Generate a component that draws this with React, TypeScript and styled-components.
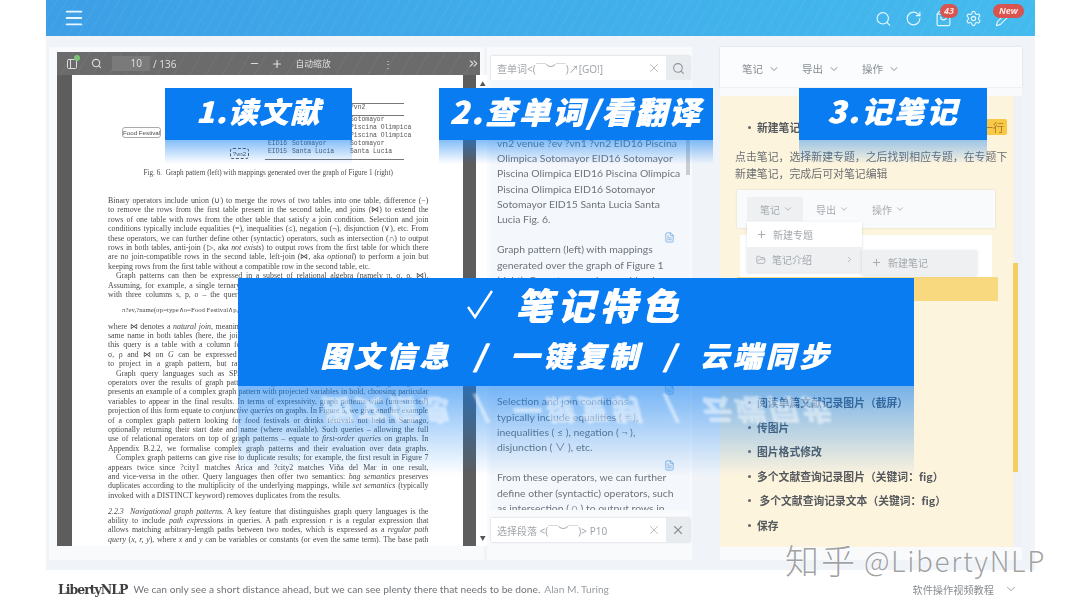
import React from "react";
import styled, { createGlobalStyle } from "styled-components";
import { ChevronDown, ChevronRight, ChevronsRight, FileText, FolderOpen, Menu, Minus, PanelLeft, Pencil, Plus, RotateCw, Search, Settings, ShoppingBag, X } from "lucide-react";

const UI_FONT = `Lato, "Noto Sans CJK SC", sans-serif`;
const CJK_FONT = `"Noto Sans CJK SC", "Noto Sans", sans-serif`;
const BLUE = "#0a7cf2";

const GlobalStyle = createGlobalStyle`
  html, body { margin: 0; padding: 0; background: #fff; }
  * { box-sizing: border-box; }
`;

/* ── Page frame ── */
const Page = styled.div`
  position: relative;
  width: 1080px;
  height: 608px;
  overflow: hidden;
  background: #fff;
  font-family: ${UI_FONT};
`;

const Frame = styled.div`
  width: 989px;
  height: 608px;
  margin-left: 46px;
  display: flex;
  flex-direction: column;
  background: #fff;
  filter: blur(0.35px);
`;

const Header = styled.header`
  height: 36px;
  flex: none;
  display: flex;
  align-items: center;
  padding: 0 23px 0 17px;
  color: #e8f6ff;
  background:
    repeating-linear-gradient(120deg, rgba(255, 255, 255, 0.05) 0 1px, transparent 1px 9px),
    linear-gradient(90deg, #3d9fe6, #44bbee);
`;

const HeaderTools = styled.div`
  margin-left: auto;
  display: flex;
  align-items: center;
  gap: 13px;
`;

const ToolIcon = styled.span`
  position: relative;
  display: flex;
  width: 17px;
  height: 17px;
`;

const Badge = styled.span<{ $wide?: boolean }>`
  position: absolute;
  top: -6px;
  left: ${(p) => (p.$wide ? "-2px" : "5px")};
  height: 14px;
  padding: 0 ${(p) => (p.$wide ? "6px" : "4px")};
  border-radius: 7px;
  background: #d9534f;
  color: #fbe3e0;
  font-family: "Noto Sans", sans-serif;
  font-size: 9px;
  font-weight: 700;
  font-style: italic;
  line-height: 14px;
`;

const Main = styled.main`
  height: 534px;
  flex: none;
  display: flex;
  padding: 11px 13px 10px 3px;
  background: #f0f4f9;
`;

/* ── PDF viewer ── */
const ReaderCard = styled.section`
  width: 435px;
  flex: none;
  padding: 5px 4px 14px 8px;
  background: #f9fafc;
`;

const Viewer = styled.div`
  height: 494px;
  display: flex;
  flex-direction: column;
`;

const PdfBar = styled.div`
  height: 23px;
  flex: none;
  display: flex;
  align-items: center;
  padding-left: 9px;
  color: #ddd;
  font-family: "Noto Sans", "Noto Sans CJK SC", sans-serif;
  font-size: 10px;
  white-space: nowrap;
  background:
    repeating-linear-gradient(120deg, rgba(255, 255, 255, 0.05) 0 1px, transparent 1px 14px),
    #6b6b6b;
`;

const PdfIcon = styled.span<{ $left: number }>`
  position: relative;
  display: flex;
  flex: none;
  margin-left: ${(p) => p.$left}px;
`;

const ZoomLabel = styled(PdfIcon)`
  font-size: 8.8px;
`;

const GreenDot = styled.i`
  position: absolute;
  top: -3px;
  right: -2px;
  width: 6px;
  height: 6px;
  border-radius: 50%;
  background: #7cc576;
`;

const PageInput = styled.span`
  width: 38px;
  height: 15px;
  flex: none;
  margin-left: 10px;
  padding-right: 8px;
  text-align: right;
  line-height: 15px;
  background: #7a7a7a;
`;

const PdfBody = styled.div`
  flex: 1;
  min-height: 0;
  display: flex;
`;

const PdfStage = styled.div`
  flex: 1;
  display: flex;
  padding: 0 13px 0 15px;
  background: #5d5d5d;
`;

const PaperSheet = styled.div`
  flex: 1;
  padding: 0 35px 0 36px;
  overflow: hidden;
  background: #fff;
  font-family: "Liberation Serif", serif;
  color: #4a4a4a;
`;

const PdfScroll = styled.div`
  width: 13px;
  flex: none;
  display: flex;
  flex-direction: column;
  justify-content: space-between;
  align-items: center;
  padding: 4px 0;
  background: #fff;
  color: #555;
  font-size: 6px;
`;

const Figure = styled.div`
  position: relative;
  height: 90px;
`;

const Node = styled.span<{ $x: number; $y: number; $w: number; $dashed?: boolean }>`
  position: absolute;
  left: ${(p) => p.$x}px;
  top: ${(p) => p.$y}px;
  width: ${(p) => p.$w}px;
  height: 11px;
  border: 1px ${(p) => (p.$dashed ? "dashed #555" : "solid #aaa")};
  border-radius: 3px;
  font-family: "Liberation Sans", sans-serif;
  font-size: 6.2px;
  line-height: 9px;
  text-align: center;
  white-space: nowrap;
`;

const MappingTable = styled.div`
  position: absolute;
  left: 157px;
  top: 28px;
  width: 139px;
  height: 57px;
  padding: 0 0 0 3px;
  border-top: 1px solid #777;
  border-bottom: 1px solid #777;
  display: grid;
  grid-template-columns: 24px 58px 1fr;
  grid-template-rows: 12px repeat(5, 8px);
  row-gap: 0;
  font-family: "Liberation Mono", monospace;
  font-size: 6.4px;
  line-height: 8px;
  color: #555;
  white-space: nowrap;
  background: linear-gradient(#777, #777) 0 11px / 100% 1px no-repeat;
`;

const Caption = styled.div`
  margin-top: 3px;
  height: 28px;
  text-align: center;
  font-size: 7.2px;
  line-height: 10px;
`;

const PaperLine = styled.div<{ $indent?: boolean; $last?: boolean }>`
  height: 9.4px;
  font-size: 7.9px;
  line-height: 9.4px;
  white-space: nowrap;
  text-align: justify;
  text-align-last: ${(p) => (p.$last ? "left" : "justify")};
  padding-left: ${(p) => (p.$indent ? "8px" : "0")};
`;

const Formula = styled.div`
  height: 22.4px;
  padding-left: 14px;
  font-size: 6.8px;
  line-height: 22.4px;
  white-space: nowrap;
`;

const SectionGap = styled.div`
  height: 6.6px;
`;

/* ── Translation column ── */
const LookupColumn = styled.section`
  width: 205px;
  flex: none;
  margin-left: 3px;
  padding: 9px 2px 18px 4px;
  display: flex;
  flex-direction: column;
  background: #f9fafc;
`;

const SearchRow = styled.div`
  height: 24px;
  flex: none;
  display: flex;
  box-shadow: 0 0 2px rgba(120, 130, 150, 0.4);
`;

const SearchInput = styled.div`
  flex: 1;
  display: flex;
  align-items: center;
  justify-content: space-between;
  padding: 0 5px 0 6px;
  background: #fff;
  color: #a2a6ab;
  font-family: "Noto Sans", "Noto Sans CJK SC", sans-serif;
  font-size: 10px;
  white-space: nowrap;
`;

const SearchButton = styled.div`
  width: 24px;
  flex: none;
  display: flex;
  align-items: center;
  justify-content: center;
  background: #e9ecef;
  color: #8b939b;
`;

const TextPane = styled.div`
  position: relative;
  height: 430px;
  flex: none;
  overflow: hidden;
  padding: 56px 16px 0 6px;
  background: #f4f7fb;
  color: #6d747c;
  font-size: 10.4px;
  line-height: 15.2px;
  white-space: nowrap;
`;

const ScrollThumb = styled.i`
  position: absolute;
  right: 0;
  top: 60px;
  width: 4px;
  height: 35px;
  background: #c9ced4;
`;

const Para = styled.p`
  position: relative;
  margin: 0 0 15.2px;
`;

const NoteMark = styled.span`
  position: absolute;
  right: -1px;
  top: -10px;
  display: flex;
  color: #7fb2e0;
`;

const BottomRow = styled(SearchRow)`
  margin-top: 8px;
`;

/* ── Notes column ── */
const NotesColumn = styled.section`
  flex: 1;
  margin-left: 28px;
  display: flex;
  flex-direction: column;
  gap: 9px;
  background: #f9fafc;
`;

const NotesBar = styled.div`
  height: 40px;
  flex: none;
  display: flex;
  align-items: center;
  padding: 3px 0 0 22px;
  gap: 22px;
  background: #fbfcfd;
  box-shadow: 0 0 2px rgba(120, 130, 150, 0.25);
`;

const BarMenu = styled.span<{ $small?: boolean; $active?: boolean }>`
  display: flex;
  align-items: center;
  gap: ${(p) => (p.$small ? "3px" : "5px")};
  height: 24px;
  color: ${(p) => (p.$small ? "#a5abb0" : "#878d93")};
  font-family: ${CJK_FONT};
  font-size: ${(p) => (p.$small ? "10px" : "10.5px")};
  padding: ${(p) => (p.$small ? "0 10px 0 13px" : "0")};
  background: ${(p) => (p.$active ? "#eef0f2" : "transparent")};
`;

const NotesTrack = styled.div`
  position: relative;
  height: 451px;
  flex: none;
  background: #eef2f8;
  padding-right: 8px;
`;

const NotesScrollThumb = styled.i`
  position: absolute;
  right: 4px;
  top: 167px;
  width: 5px;
  height: 209px;
  background: #f3cf62;
`;

const NotesBody = styled.div`
  height: 451px;
  overflow: hidden;
  padding: 22px 7px 0 15px;
  background: #fdf4de;
  color: #55585c;
  font-family: ${CJK_FONT};
`;

const Heading = styled.div`
  position: relative;
  display: flex;
  align-items: center;
  justify-content: space-between;
  height: 18px;
  padding-left: 22px;
  font-size: 10.8px;
  font-weight: 700;
  &::before {
    content: "";
    position: absolute;
    left: 13px;
    top: 8px;
    width: 3px;
    height: 3px;
    border-radius: 50%;
    background: #666;
  }
`;

const Tag = styled.span`
  padding: 0 3px;
  height: 16px;
  line-height: 16px;
  background: #f9c846;
  color: #a5792a;
  font-weight: 400;
  font-size: 11px;
  border-radius: 2px;
`;

const NoteText = styled.p`
  margin: 11.5px -4px 0 0;
  height: 42.5px;
  font-size: 10.9px;
  line-height: 17px;
  color: #6b6e72;
`;

const Mock = styled.div`
  position: relative;
  height: 200px;
  margin: 0 12px 0 2px;
`;

const MockBar = styled.div`
  height: 38px;
  display: flex;
  align-items: center;
  padding-left: 10px;
  background: #f9fafb;
  box-shadow: 0 0 2px rgba(120, 130, 150, 0.25);
`;

const MockPane = styled.div`
  height: 42px;
  margin: 7px 3px 0;
  background: #fff;
`;

const MockStrip = styled.div`
  height: 24px;
  margin-right: -3px;
  background: #f9d97f;
`;

const Dropdown = styled.div<{ $x: number; $y: number; $gray?: boolean }>`
  position: absolute;
  left: ${(p) => p.$x}px;
  top: ${(p) => p.$y}px;
  width: 115px;
  background: ${(p) => (p.$gray ? "#eef0f2" : "#fff")};
  box-shadow: 0 1px 3px rgba(90, 100, 110, 0.2);
`;

const DropItem = styled.div<{ $gray?: boolean }>`
  height: 25px;
  display: flex;
  align-items: center;
  gap: 6px;
  padding: 0 8px 0 9px;
  color: #a3a8ad;
  font-size: 10px;
  background: ${(p) => (p.$gray ? "#eef0f2" : "transparent")};
`;

const DropArrow = styled.span`
  margin-left: auto;
  display: flex;
`;

const BulletList = styled.ul`
  margin: 0;
  padding: 0 0 0 22px;
  list-style: none;
`;

const Bullet = styled.li`
  position: relative;
  height: 24.6px;
  font-size: 10.8px;
  font-weight: 700;
  line-height: 24.6px;
  white-space: pre;
  &::before {
    content: "";
    position: absolute;
    left: -9px;
    top: 11px;
    width: 3px;
    height: 3px;
    border-radius: 50%;
    background: #666;
  }
`;

/* ── Footer ── */
const Footer = styled.footer`
  flex: 1;
  display: flex;
  align-items: center;
  padding: 0 17px 0 12px;
  font-size: 10.2px;
  color: #6f7377;
  white-space: nowrap;
`;

const Brand = styled.b`
  font-family: "DejaVu Serif", serif;
  font-size: 12.5px;
  letter-spacing: -1px;
  color: #3e3e3e;
  margin-right: 6px;
`;

const Quote = styled.span`
  color: #999da1;
  margin-left: 4px;
`;

const Tutorial = styled.span`
  margin-left: auto;
  display: flex;
  align-items: center;
  gap: 10px;
  color: #8a8e92;
  font-family: ${CJK_FONT};
  font-size: 10.2px;
`;

/* ── Promo overlays ── */
const Callout = styled.div<{ $x: number; $w: number; $y: number; $h: number; $drop: number }>`
  position: absolute;
  left: ${(p) => p.$x}px;
  top: ${(p) => p.$y}px;
  width: ${(p) => p.$w}px;
  height: ${(p) => p.$h}px;
  padding-bottom: ${(p) => p.$drop}px;
  display: flex;
  flex-direction: column;
  align-items: center;
  justify-content: center;
  background: ${BLUE};
  filter: blur(0.3px);
`;

const Glow = styled.div<{ $h: number; $strength: number }>`
  position: absolute;
  left: 0;
  right: 0;
  top: 100%;
  height: ${(p) => p.$h}px;
  overflow: hidden;
  background: linear-gradient(180deg, rgba(10, 124, 242, ${(p) => p.$strength}), rgba(10, 124, 242, 0));
`;

const PromoText = styled.span<{ $size: number; $space: number }>`
  font-family: ${CJK_FONT};
  font-size: ${(p) => p.$size}px;
  letter-spacing: ${(p) => p.$space}px;
  font-weight: 900;
  font-style: italic;
  line-height: 1;
  color: #fff;
  white-space: pre;
  text-shadow: 0.8px 0 0 #fff;
`;

const CheckRow = styled.div`
  display: flex;
  align-items: center;
  gap: 22px;
  margin-bottom: 17px;
  margin-left: -2px;
`;

const Mirror = styled.div`
  text-align: center;
  margin-top: 10px;
  transform: scaleY(-1);
  opacity: 0.5;
  filter: blur(0.8px);
`;

const Watermark = styled.div`
  position: absolute;
  left: 785px;
  top: 540px;
  display: flex;
  align-items: center;
  gap: 7px;
  font-family: ${CJK_FONT};
  font-size: 28px;
  font-weight: 300;
  letter-spacing: 1.6px;
  line-height: 40px;
  color: rgba(125, 125, 125, 0.72);
  white-space: nowrap;
  text-shadow: 0 0 2px rgba(255, 255, 255, 0.9);
`;

const WatermarkCjk = styled.span`
  font-size: 34px;
  letter-spacing: 2px;
`;

const BODY_A: React.ReactNode[] = [
  "Binary operators include union (∪) to merge the rows of two tables into one table, difference (−)",
  "to remove the rows from the first table present in the second table, and joins (⋈) to extend the",
  "rows of one table with rows from the other table that satisfy a join condition. Selection and join",
  "conditions typically include equalities (=), inequalities (≤), negation (¬), disjunction (∨), etc. From",
  "these operators, we can further define other (syntactic) operators, such as intersection (∩) to output",
  <>rows in both tables, anti-join (▷, aka <i>not exists</i>) to output rows from the first table for which there</>,
  <>are no join-compatible rows in the second table, left-join (⋈, aka <i>optional</i>) to perform a join but</>,
  "keeping rows from the first table without a compatible row in the second table, etc.",
  "  Graph patterns can then be expressed in a subset of relational algebra (namely π, σ, ρ, ⋈).",
  "Assuming, for example, a single ternary relation G(s, p, o) representing a graph – i.e., a table G",
  "with three columns s, p, o – the query of Figure 5 can be expressed in relational algebra as:",
];

const BODY_B: React.ReactNode[] = [
  <>where ⋈ denotes a <i>natural join</i>, meaning that equality is checked across pairs of columns with the</>,
  "same name in both tables (here, the join is thus performed on the subject column). The result of",
  "this query is a table with a column for each variable: ev and name. All operators such as π,",
  <>σ, ρ and ⋈ on <i>G</i> can be expressed as graph patterns, though ∪ and − need not be used</>,
  "to project in a graph pattern, but rather are applied to the results of such graph patterns.",
  "  Graph query languages such as SPARQL also support the use of set and other relational",
  "operators over the results of graph patterns, though not all of them in every language. Figure 7",
  "presents an example of a complex graph pattern with projected variables in bold, choosing particular",
  "variables to appear in the final results. In terms of expressivity, graph patterns with (unrestricted)",
  <>projection of this form equate to <i>conjunctive queries</i> on graphs. In Figure 5, we give another example</>,
  "of a complex graph pattern looking for food festivals or drinks festivals not held in Santiago,",
  "optionally returning their start date and name (where available). Such queries – allowing the full",
  <>use of relational operators on top of graph patterns – equate to <i>first-order queries</i> on graphs. In</>,
  "Appendix B.2.2, we formalise complex graph patterns and their evaluation over data graphs.",
  "  Complex graph patterns can give rise to duplicate results; for example, the first result in Figure 7",
  "appears twice since ?city1 matches Arica and ?city2 matches Viña del Mar in one result,",
  <>and vice-versa in the other. Query languages then offer two semantics: <i>bag semantics</i> preserves</>,
  <>duplicates according to the multiplicity of the underlying mappings, while <i>set semantics</i> (typically</>,
  "invoked with a DISTINCT keyword) removes duplicates from the results.",
];

const BODY_C: React.ReactNode[] = [
  <><i>2.2.3 &nbsp;Navigational graph patterns.</i> A key feature that distinguishes graph query languages is the</>,
  <>ability to include <i>path expressions</i> in queries. A path expression <i>r</i> is a regular expression that</>,
  <>allows matching arbitrary-length paths between two nodes, which is expressed as a <i>regular path</i></>,
  <><i>query</i> (<i>x, r, y</i>), where <i>x</i> and <i>y</i> can be variables or constants (or even the same term). The base path</>,
];

const MAPPINGS = [
  ["", "", "?vn2"],
  ["", "", "Sotomayor"],
  ["", "", "Piscina Olimpica"],
  ["", "", "Piscina Olimpica"],
  ["EID16", "Sotomayor", "Sotomayor"],
  ["EID15", "Santa Lucia", "Santa Lucia"],
];

const LIST = ["阅读单篇文献记录图片（截屏）", "传图片", "图片格式修改", "多个文献查询记录图片（关键词：fig）", " 多个文献查询记录文本（关键词：fig）", "保存"];

function renderLines(list: React.ReactNode[], lastIdx: number[] = []) {
  return list.map((line, i) => {
    const text = typeof line === "string" ? line : null;
    const indent = !!text && text.startsWith("  ");
    return (
      <PaperLine key={i} $indent={indent} $last={lastIdx.includes(i)}>
        {indent ? text!.trim() : line}
      </PaperLine>
    );
  });
}

export default function App() {
  return (
    <Page>
      <GlobalStyle />
      <Frame>
        <Header>
          <Menu size={22} strokeWidth={2} />
          <HeaderTools>
            <ToolIcon><Search size={18} strokeWidth={1.6} /></ToolIcon>
            <ToolIcon><RotateCw size={17} strokeWidth={1.6} /></ToolIcon>
            <ToolIcon><ShoppingBag size={17} strokeWidth={1.6} /><Badge>43</Badge></ToolIcon>
            <ToolIcon><Settings size={17} strokeWidth={1.6} /></ToolIcon>
            <ToolIcon><Pencil size={17} strokeWidth={1.6} /><Badge $wide>New</Badge></ToolIcon>
          </HeaderTools>
        </Header>

        <Main>
          <ReaderCard>
            <Viewer>
              <PdfBar>
                <PdfIcon $left={0}><PanelLeft size={12} /><GreenDot /></PdfIcon>
                <PdfIcon $left={13}><Search size={11} strokeWidth={2.4} /></PdfIcon>
                <PageInput>10</PageInput>
                <PdfIcon $left={3}>/ 136</PdfIcon>
                <PdfIcon $left={73}><Minus size={11} strokeWidth={2.4} /></PdfIcon>
                <PdfIcon $left={11}><Plus size={12} strokeWidth={2.4} /></PdfIcon>
                <ZoomLabel $left={12}>自动缩放</ZoomLabel>
                <PdfIcon $left={52}>⋮</PdfIcon>
                <PdfIcon $left={74}><ChevronsRight size={13} /></PdfIcon>
              </PdfBar>
              <PdfBody>
                <PdfStage>
                  <PaperSheet>
                    <Figure>
                      <Node $x={14} $y={52} $w={39}>Food Festival</Node>
                      <Node $x={122} $y={73} $w={19} $dashed>?vn2</Node>
                      <MappingTable>
                        {MAPPINGS.flat().map((cell, i) => <span key={i}>{cell}</span>)}
                      </MappingTable>
                    </Figure>
                    <Caption>Fig. 6. &nbsp;Graph pattern (left) with mappings generated over the graph of Figure 1 (right)</Caption>
                    {renderLines(BODY_A, [7])}
                    <Formula>π?ev,?name(σp=type∧o=Food Festival∧p₁=name(ρs/ev(G) ⋈ ρs/ev,p/p₁,o/name(G)))</Formula>
                    {renderLines(BODY_B, [18])}
                    <SectionGap />
                    {renderLines(BODY_C)}
                  </PaperSheet>
                </PdfStage>
                <PdfScroll><span>▲</span><span>▼</span></PdfScroll>
              </PdfBody>
            </Viewer>
          </ReaderCard>

          <LookupColumn>
            <SearchRow>
              <SearchInput>查单词&lt;(￣︶￣)↗[GO!]<X size={14} strokeWidth={1.3} /></SearchInput>
              <SearchButton><Search size={13} /></SearchButton>
            </SearchRow>
            <TextPane>
              <ScrollThumb />
              <Para>vn2 venue ?ev ?vn1 ?vn2 EID16 Piscina<br />Olimpica Sotomayor EID16 Sotomayor<br />Piscina Olimpica EID16 Piscina Olimpica<br />Piscina Olimpica EID16 Sotomayor<br />Sotomayor EID15 Santa Lucia Santa<br />Lucia Fig. 6.</Para>
              <Para><NoteMark><FileText size={11} /></NoteMark>Graph pattern (left) with mappings<br />generated over the graph of Figure 1<br />(right). Operators can be combined.</Para>
              <Para><NoteMark><FileText size={11} /></NoteMark>Binary operators include union ( ∪ ) to<br />merge the rows of two tables into one<br />table, difference ( − ) to remove the rows<br />from the first table, and joins ( ⋈ ) to<br />extend the rows of one table.</Para>
              <Para><NoteMark><FileText size={11} /></NoteMark>Selection and join conditions<br />typically include equalities ( = ),<br />inequalities ( ≤ ), negation ( ¬ ),<br />disjunction ( ∨ ), etc.</Para>
              <Para><NoteMark><FileText size={11} /></NoteMark>From these operators, we can further<br />define other (syntactic) operators, such<br />as intersection ( ∩ ) to output rows in<br />both tables.</Para>
            </TextPane>
            <BottomRow>
              <SearchInput>选择段落 &lt;(￣︶￣)&gt; P10<X size={14} strokeWidth={1.3} /></SearchInput>
              <SearchButton><X size={14} /></SearchButton>
            </BottomRow>
          </LookupColumn>

          <NotesColumn>
            <NotesBar>
              <BarMenu>笔记<ChevronDown size={12} /></BarMenu>
              <BarMenu>导出<ChevronDown size={12} /></BarMenu>
              <BarMenu>操作<ChevronDown size={12} /></BarMenu>
            </NotesBar>
            <NotesTrack>
              <NotesBody>
                <Heading>新建笔记<Tag>一行</Tag></Heading>
                <NoteText>点击笔记，选择新建专题，之后找到相应专题，在专题下新建笔记，完成后可对笔记编辑</NoteText>
                <Mock>
                  <MockBar>
                    <BarMenu $small $active>笔记<ChevronDown size={10} /></BarMenu>
                    <BarMenu $small>导出<ChevronDown size={10} /></BarMenu>
                    <BarMenu $small>操作<ChevronDown size={10} /></BarMenu>
                  </MockBar>
                  <MockPane />
                  <MockStrip />
                  <Dropdown $x={10} $y={32}>
                    <DropItem><Plus size={11} />新建专题</DropItem>
                    <DropItem $gray><FolderOpen size={10} />笔记介绍<DropArrow><ChevronRight size={9} /></DropArrow></DropItem>
                  </Dropdown>
                  <Dropdown $x={125} $y={60} $gray>
                    <DropItem $gray><Plus size={11} />新建笔记</DropItem>
                  </Dropdown>
                </Mock>
                <BulletList>
                  {LIST.map((item) => <Bullet key={item}>{item}</Bullet>)}
                </BulletList>
              </NotesBody>
              <NotesScrollThumb />
            </NotesTrack>
          </NotesColumn>
        </Main>

        <Footer>
          <Brand>LibertyNLP</Brand>
          We can only see a short distance ahead, but we can see plenty there that needs to be done.
          <Quote>Alan M. Turing</Quote>
          <Tutorial>软件操作视频教程<ChevronDown size={14} strokeWidth={1.4} /></Tutorial>
        </Footer>
      </Frame>

      <Callout $x={165} $w={187} $y={88} $h={52} $drop={8}>
        <PromoText $size={29} $space={2}>1.读文献</PromoText>
        <Glow $h={24} $strength={0.5} />
      </Callout>
      <Callout $x={439} $w={274} $y={88} $h={52} $drop={8}>
        <PromoText $size={31} $space={2.8}>2.查单词/看翻译</PromoText>
        <Glow $h={24} $strength={0.5} />
      </Callout>
      <Callout $x={799} $w={188} $y={88} $h={52} $drop={8}>
        <PromoText $size={30} $space={2.6}>3.记笔记</PromoText>
        <Glow $h={24} $strength={0.4} />
      </Callout>
      <Callout $x={238} $w={676} $y={278} $h={108} $drop={9}>
        <CheckRow>
          <svg width="26" height="30" viewBox="0 0 26 30" fill="none" stroke="#fff" strokeWidth="2.4">
            <path d="M1 17 L8 27 L25 1" />
          </svg>
          <PromoText $size={37} $space={5}>笔记特色</PromoText>
        </CheckRow>
        <PromoText $size={29} $space={4}>图文信息  /  一键复制  /  云端同步</PromoText>
        <Glow $h={90} $strength={0.55}>
          <Mirror><PromoText $size={29} $space={4}>图文信息  /  一键复制  /  云端同步</PromoText></Mirror>
        </Glow>
      </Callout>

      <Watermark><WatermarkCjk>知乎</WatermarkCjk>@LibertyNLP</Watermark>
    </Page>
  );
}
